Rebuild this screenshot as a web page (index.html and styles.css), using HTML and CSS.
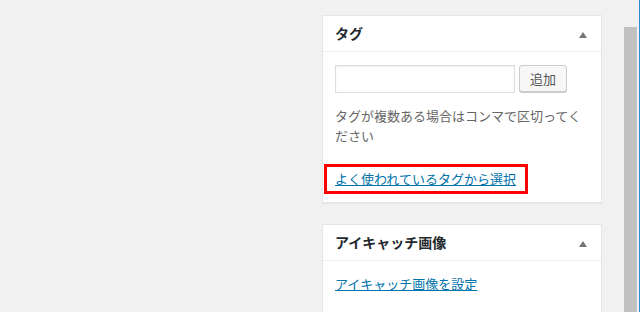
FILE: index.html
```html
<!DOCTYPE html>
<html lang="ja">
<head>
  <meta charset="UTF-8" />
  <title>タグ</title>
  <link rel="stylesheet" href="styles.css">
</head>
<body>

<div class="screen">
  <div class="sidebar">

    <div class="postbox">
      <h2 class="postbox-title">
        <span>タグ</span>
        <span class="toggle-arrow"></span>
      </h2>
      <div class="inside">
        <div class="tag-add">
          <input type="text" class="tag-input" />
          <button type="button" class="btn">追加</button>
        </div>
        <p class="howto">タグが複数ある場合はコンマで区切ってください</p>
        <div class="highlight">
          <a href="#" class="link">よく使われているタグから選択</a>
        </div>
      </div>
    </div>

    <div class="postbox">
      <h2 class="postbox-title">
        <span>アイキャッチ画像</span>
        <span class="toggle-arrow"></span>
      </h2>
      <div class="inside inside-tall">
        <p class="thumb-link"><a href="#" class="link">アイキャッチ画像を設定</a></p>
      </div>
    </div>

  </div>

  <div class="scrollbar">
    <div class="scroll-thumb"></div>
  </div>
  <div class="edge-line"></div>
</div>

</body>
</html>
```

FILE: styles.css
```css
html, body {
  margin: 0; padding: 0; height: 100%;
  background: #f1f1f1;
  font-family: "Noto Sans CJK JP", "Noto Sans", sans-serif;
  color: #23282d;
  overflow: hidden;
}
.screen {
  display: flex;
  justify-content: flex-end;
  height: 100%;
}
.sidebar {
  width: 280px;
  padding-top: 15px;
  margin-right: 22px;
}
.postbox {
  background: #fff;
  border: 1px solid #e5e5e5;
  box-shadow: 0 1px 1px rgba(0, 0, 0, 0.04);
  margin-bottom: 21px;
}
.postbox-title {
  margin: 0;
  height: 35px;
  padding: 0 14px 0 12px;
  border-bottom: 1px solid #eee;
  display: flex;
  justify-content: space-between;
  align-items: center;
  font-size: 14px;
  font-weight: bold;
  line-height: 35px;
}
.toggle-arrow {
  width: 0; height: 0;
  border-left: 4px solid transparent;
  border-right: 4px solid transparent;
  border-bottom: 6px solid #72777c;
  margin-top: 2px;
}
.inside {
  padding: 0 12px 8px;
  font-size: 13px;
}
.inside-tall {
  padding-bottom: 40px;
}
.tag-add {
  display: flex;
  gap: 4px;
  margin-top: 13px;
}
.tag-input {
  width: 180px;
  height: 28px;
  box-sizing: border-box;
  margin: 0;
  border: 1px solid #ddd;
  box-shadow: inset 0 1px 2px rgba(0, 0, 0, 0.07);
  background: #fff;
}
.btn {
  width: 48px;
  height: 27px;
  margin: 0;
  padding: 0;
  box-sizing: border-box;
  background: #f7f7f7;
  border: 1px solid #ccc;
  border-radius: 3px;
  box-shadow: 0 1px 0 #ccc;
  color: #555;
  font-family: inherit;
  font-size: 13px;
}
.howto {
  margin: 13px 0 18px;
  line-height: 20px;
  color: #666;
}
.highlight {
  display: inline-block;
  margin-left: -11px;
  padding: 3px 9px 3px 8px;
  border: 3px solid #f00;
  line-height: 18px;
}
.link {
  color: #0073aa;
  text-decoration: underline;
}
.thumb-link {
  margin: 13px 0 0;
  line-height: 20px;
}
.scrollbar {
  width: 13px;
  margin-right: 2px;
  padding-top: 27px;
}
.scroll-thumb {
  height: 100%;
  background: #c1c1c1;
}
.edge-line {
  width: 1px;
  background: #2e8ed0;
}
```
